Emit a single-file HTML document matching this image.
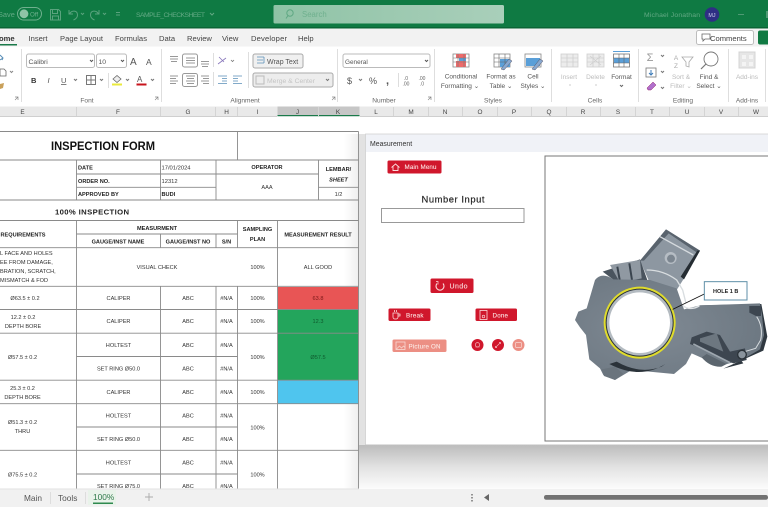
<!DOCTYPE html>
<html><head><meta charset="utf-8"><title>Excel Measurement</title>
<style>
html,body{margin:0;padding:0;background:#fff;width:768px;height:507px;overflow:hidden}
svg{display:block;font-family:"Liberation Sans",sans-serif;filter:blur(.35px)}
.r{font-size:7.6px;fill:#444}
.g{font-size:6.6px;fill:#666}
.h{font-size:6.4px;fill:#444;text-anchor:middle}
.t{font-size:5.6px;fill:#333;text-anchor:middle}
.b{font-size:5.6px;fill:#222;font-weight:bold}
.c{text-anchor:middle}
.btn{font-size:6.2px;fill:#fbdcdc;stroke:#fbdcdc;stroke-width:.12}
</style></head><body>
<svg width="768" height="507" viewBox="0 0 768 507" xmlns="http://www.w3.org/2000/svg">
<defs>
<linearGradient id="sb" x1="0" y1="0" x2="0" y2="1"><stop offset="0" stop-color="#bcbcbc"/><stop offset=".5" stop-color="#e2e2e2"/><stop offset="1" stop-color="#fcfcfc"/></linearGradient>
<linearGradient id="sl" x1="0" y1="0" x2="1" y2="0"><stop offset="0" stop-color="#fff"/><stop offset=".6" stop-color="#f0f0f0"/><stop offset="1" stop-color="#d4d4d4"/></linearGradient>
<linearGradient id="se" x1="0" y1="0" x2="1" y2="0"><stop offset="0" stop-color="#8fc3a6"/><stop offset="1" stop-color="#a9cfba"/></linearGradient>
<radialGradient id="metal" cx=".4" cy=".5" r=".7"><stop offset="0" stop-color="#808a94"/><stop offset="1" stop-color="#6a757f"/></radialGradient>
</defs>
<rect width="768" height="507" fill="#fff"/>

<!-- Title bar -->
<rect width="768" height="28" fill="#0f7a43"/>
<rect y="27" width="768" height="1.5" fill="#0a6535"/>
<text x="-2" y="17" font-size="7.4" fill="#63a984">Save</text>
<rect x="17.5" y="7.5" width="24" height="12.5" rx="6.2" fill="#0f7a43" stroke="#6fb08e"/>
<circle cx="24" cy="13.8" r="4.4" fill="#8fc3a6"/>
<text x="30" y="16.3" font-size="6.2" fill="#6fb08e">Off</text>
<g fill="none" stroke="#5aa37e" stroke-width="1">
<path d="M50.5 9.5h8l2 2v8.5h-10zM52.5 9.500v4h5v-4M52.500 20v-4h6v4"/>
<path d="M69 10v4h4M69.500 14c2-4 8-4 8 1 0 2-1.500 4-4 5"/>
<path d="M81 13l1.500 1.500 1.500-1.500"/>
<path d="M99 10v4h-4M98.500 14c-2-4-8-4-8 1 0 2 1.500 4 4 5"/>
<path d="M103 13l1.500 1.500 1.500-1.500"/>
<path d="M116 12.500h4M116 15h4"/>
</g>
<text x="136" y="17" font-size="6.800" fill="#63a984" textLength="69">SAMPLE_CHECKSHEET</text>
<path d="M210 13l2 2 2-2" fill="none" stroke="#63a984"/>
<rect x="273.500" y="5" width="230.500" height="18.500" rx="1.500" fill="url(#se)"/>
<circle cx="290" cy="13" r="3.200" fill="none" stroke="#5fa883"/><path d="M288 15.500l-2 3" stroke="#5fa883"/>
<text x="302" y="17" font-size="7.800" fill="#6fb08e">Search</text>
<text x="644" y="17" font-size="6.800" fill="#63a984" textLength="56">Michael Jonathan</text>
<circle cx="712" cy="14.500" r="7.300" fill="#2e2f84"/>
<text x="712" y="17" font-size="5.400" fill="#cfd0ee" class="c">MJ</text>
<rect x="738" y="14" width="6" height="1" fill="#4f9a74"/>
<rect x="766" y="11" width="2" height="7" fill="#4f9a74"/>

<!-- Tab strip -->
<rect y="28.500" width="768" height="18" fill="#f2f2f2"/>
<text x="-1" y="41" class="r" style="font-weight:bold;fill:#333">ome</text>
<rect x="0" y="44" width="17" height="1.500" fill="#1a7a4a"/>
<text x="28.500" y="41" class="r">Insert</text>
<text x="60" y="41" class="r" textLength="43">Page Layout</text>
<text x="115" y="41" class="r" textLength="32">Formulas</text>
<text x="159" y="41" class="r">Data</text>
<text x="187" y="41" class="r">Review</text>
<text x="222" y="41" class="r">View</text>
<text x="251" y="41" class="r" textLength="36">Developer</text>
<text x="298" y="41" class="r">Help</text>
<rect x="696.500" y="30.500" width="57" height="14" rx="2" fill="#fff" stroke="#bdbdbd"/>
<path d="M702 34h8v5h-5l-2 2v-2h-1z" fill="none" stroke="#666" stroke-width=".8"/>
<text x="710" y="41" font-size="7.600" fill="#444">Comments</text>
<rect x="758" y="30.500" width="12" height="14" rx="2" fill="#117a43"/>

<!-- Ribbon -->
<rect y="46.500" width="768" height="60" fill="#fff"/>
<g fill="#dedede">
<rect x="21" y="49" width="1" height="53"/><rect x="161" y="49" width="1" height="53"/><rect x="337" y="49" width="1" height="53"/>
<rect x="434" y="49" width="1" height="53"/><rect x="551" y="49" width="1" height="53"/><rect x="638" y="49" width="1" height="53"/>
<rect x="728" y="49" width="1" height="53"/><rect x="765" y="49" width="1" height="53"/>
<rect x="248" y="52" width="1" height="36"/><rect x="213" y="53" width="1" height="14"/><rect x="213" y="72" width="1" height="14"/>
<rect x="108" y="73" width="1" height="15"/>
</g>
<path d="M0 55l3 3-1 2M3 58l-3 2" stroke="#5a8fb8" fill="none"/>
<path d="M0 69h4l2 2v5H0z" fill="#fff" stroke="#666" stroke-width=".8"/>
<path d="M10 71l1.500 1.500 1.500-1.500" stroke="#888" fill="none"/>
<path d="M0 84l4-1-1 5-3 1z" fill="#c9a05a"/>
<path d="M15 97h3v3M15 100l3-3" stroke="#888" fill="none" stroke-width=".7"/>
<!-- Font group -->
<rect x="26.500" y="54" width="68" height="13.500" rx="2" fill="#fff" stroke="#bbb"/>
<text x="28.500" y="64" font-size="6.800" fill="#555">Calibri</text>
<path d="M90 60l1.500 1.500 1.500-1.500" stroke="#555" fill="none"/>
<rect x="96.500" y="54" width="30" height="13.500" rx="2" fill="#fff" stroke="#bbb"/>
<text x="98.500" y="64" font-size="6.800" fill="#555">10</text>
<path d="M121 60l1.500 1.500 1.500-1.500" stroke="#555" fill="none"/>
<text x="130" y="65" font-size="10" fill="#555">A</text><text x="146" y="65" font-size="8.500" fill="#555">A</text>
<text x="31" y="83" font-size="7.500" font-weight="bold" fill="#333">B</text>
<text x="47.500" y="83" font-size="7.500" font-style="italic" fill="#555">I</text>
<text x="61" y="83" font-size="7.500" fill="#555" text-decoration="underline">U</text>
<path d="M74 79l1.500 1.500 1.500-1.500M100 79l1.500 1.500 1.500-1.500M126 79l1.500 1.500 1.500-1.500M151 79l1.500 1.500 1.500-1.500" stroke="#777" fill="none"/>
<path d="M86.500 75.500h9v9h-9zM91 75.500v9M86.500 80h9" fill="none" stroke="#777"/>
<path d="M113 79l4-3.500 4 3.500-4 3.500z" fill="#eee" stroke="#666" stroke-width=".8"/>
<rect x="112" y="83.500" width="10" height="2" fill="#eaea3c"/>
<text x="137" y="82" font-size="8" fill="#555">A</text>
<rect x="136.500" y="83.500" width="10" height="2" fill="#c8141c"/>
<text x="87" y="102.500" class="g c">Font</text>
<path d="M155 97h3v3M155 100l3-3" stroke="#888" fill="none" stroke-width=".7"/>
<!-- Alignment -->
<g stroke="#777" stroke-width=".8" fill="none">
<path d="M170 56.500h8M170 59h8M171 61.500h6"/>
<path d="M186 58h9M186 60.500h9M186 63h9"/>
<path d="M201 61.500h8M201 64h8M202 66.500h6"/>
<path d="M170 76h8M170 78.500h6M170 81h8M170 83.500h6"/>
<path d="M186 76h9M187 78.500h7M186 81h9M187 83.500h7"/>
<path d="M201 76h8M203 78.500h6M201 81h8M203 83.500h6"/>
<path d="M218 76h9M222 78.500h5M222 81h5M218 83.500h9" stroke="#5a8fb8"/>
<path d="M233 76h9M233 78.500h5M233 81h5M233 83.500h9" stroke="#5a8fb8"/>
<path d="M218 64l8-6M219 57l5 5" stroke="#8877bb"/>
<path d="M231 60l1.500 1.500 1.500-1.500"/>
</g>
<rect x="182.500" y="54" width="15" height="13" rx="2" fill="none" stroke="#999"/>
<rect x="182.500" y="73.500" width="15" height="13" rx="2" fill="none" stroke="#999"/>
<rect x="253" y="54" width="50" height="14" rx="2" fill="#f0f0f0" stroke="#aaa"/>
<path d="M257 57h7M257 60h6M257 63h7M264 57v6" stroke="#5a8fb8" fill="none" stroke-width=".8"/>
<text x="267" y="64" font-size="7" fill="#555">Wrap Text</text>
<rect x="253" y="73" width="80" height="14" rx="2" fill="#ededed" stroke="#aaa"/>
<rect x="256" y="76" width="8" height="8" fill="none" stroke="#bbb"/>
<text x="267" y="83" font-size="6.800" fill="#c4c4c4">Merge &amp; Center</text>
<path d="M326 79l1.500 1.500 1.500-1.500" stroke="#777" fill="none"/>
<text x="245" y="102.500" class="g c">Alignment</text>
<path d="M332 97h3v3M332 100l3-3" stroke="#888" fill="none" stroke-width=".7"/>
<!-- Number -->
<rect x="343" y="54" width="87" height="13.500" rx="2" fill="#fff" stroke="#bbb"/>
<text x="345" y="64" font-size="6.400" fill="#555">General</text>
<path d="M425 60l1.500 1.500 1.500-1.500" stroke="#555" fill="none"/>
<text x="347" y="84" font-size="9" fill="#555">$</text>
<path d="M359 79l1.500 1.500 1.500-1.500" stroke="#777" fill="none"/>
<text x="369" y="84" font-size="9" fill="#555">%</text>
<text x="386" y="84" font-size="11" font-weight="bold" fill="#555">,</text>
<text x="406" y="80" font-size="5" fill="#666" class="c">.0</text><text x="406" y="85.500" font-size="5" fill="#666" class="c">.00</text>
<text x="422" y="80" font-size="5" fill="#666" class="c">.00</text><text x="422" y="85.500" font-size="5" fill="#666" class="c">.0</text>
<rect x="398" y="73" width="1" height="14" fill="#ddd"/>
<text x="384" y="102.500" class="g c">Number</text>
<path d="M428 97h3v3M428 100l3-3" stroke="#888" fill="none" stroke-width=".7"/>
<!-- Styles -->
<g>
<rect x="453" y="54" width="16" height="13" fill="#fff" stroke="#888" stroke-width=".8"/>
<rect x="456" y="54" width="10" height="4" fill="#ee6a6a"/><rect x="456" y="61" width="10" height="6" fill="#ee6a6a"/><rect x="459" y="58" width="7" height="3" fill="#5a9fd8"/>
<path d="M453 58h16M453 62h16M458 54v13M464 54v13" stroke="#777" stroke-width=".6"/>
<rect x="494" y="54" width="16" height="13" fill="#fff" stroke="#888" stroke-width=".8"/>
<rect x="500" y="59" width="10" height="8" fill="#5a9fd8"/>
<path d="M494 58h16M494 62h16M499 54v13M505 54v13" stroke="#666" stroke-width=".6"/>
<path d="M501 69l8-10 3 2-8 9z" fill="#88a8d0" stroke="#556" stroke-width=".5"/>
<rect x="525" y="54" width="16" height="13" fill="#fff" stroke="#888" stroke-width=".8"/>
<rect x="526" y="58" width="14" height="8" fill="#5a9fd8"/>
<path d="M532 69l8-10 3 2-8 9z" fill="#88a8d0" stroke="#556" stroke-width=".5"/>
</g>
<g font-size="6.500" fill="#555" text-anchor="middle">
<text x="461" y="78.500">Conditional</text><text x="460" y="88">Formatting ⌄</text>
<text x="501" y="78.500">Format as</text><text x="501" y="88">Table ⌄</text>
<text x="533" y="78.500">Cell</text><text x="533" y="88">Styles ⌄</text>
</g>
<text x="493" y="102.500" class="g c">Styles</text>
<!-- Cells -->
<g stroke="#cfcfcf" stroke-width=".8" fill="#ececec">
<rect x="561" y="54" width="17" height="13"/><path d="M561 58h17M561 62h17M567 54v13M573 54v13" fill="none"/>
<rect x="587" y="54" width="17" height="13"/><path d="M587 58h17M587 62h17M593 54v13M599 54v13M590 56l11 9M601 56l-11 9" fill="none"/>
</g>
<rect x="613.500" y="54" width="16" height="13" fill="#fff" stroke="#777" stroke-width=".8"/>
<rect x="614" y="58" width="15" height="5" fill="#5a9fd8"/>
<path d="M613 58h17M613 63h17M619 54v13M624 54v13" stroke="#666" stroke-width=".6"/>
<path d="M613 51.500h17" stroke="#5a9fd8"/>
<text x="569" y="79" font-size="6.500" class="c" fill="#bcbcbc">Insert</text>
<text x="595.500" y="79" font-size="6.500" class="c" fill="#bcbcbc">Delete</text>
<text x="621.500" y="79" font-size="6.500" class="c" fill="#555">Format</text>
<path d="M569 85h2M595 85h2" stroke="#ccc"/>
<path d="M620 85l1.500 1.500 1.500-1.500" stroke="#666" fill="none"/>
<text x="595" y="102.500" class="g c">Cells</text>
<!-- Editing -->
<text x="650" y="61" font-size="11" fill="#999" class="c">Σ</text>
<path d="M661 55l1.500 1.500 1.500-1.500M661 71l1.500 1.500 1.500-1.500M661 87l1.500 1.500 1.500-1.500" stroke="#777" fill="none"/>
<rect x="646" y="68" width="10" height="9" fill="#fff" stroke="#777" stroke-width=".8"/><path d="M651 70v5M649 73l2 2 2-2" stroke="#3a7ab8" fill="none"/>
<path d="M647 88l6-6 3 3-5 5h-3z" fill="#b070cc" stroke="#805" stroke-width=".4"/>
<text x="676" y="60" font-size="6.500" fill="#aaa" class="c">A</text><text x="676" y="68" font-size="6.500" fill="#aaa" class="c">Z</text>
<path d="M682 57h11l-4 5v5l-3-1v-4z" fill="#fff" stroke="#aaa" stroke-width=".8"/>
<circle cx="711" cy="59" r="7" fill="#fff" stroke="#777" stroke-width=".9"/>
<path d="M706 64l-5 5" stroke="#777" stroke-width="1.200"/>
<text x="681" y="79" font-size="6.500" fill="#bbb" class="c">Sort &amp;</text><text x="681" y="88" font-size="6.500" fill="#bbb" class="c">Filter ⌄</text>
<text x="709" y="79" font-size="6.500" fill="#555" class="c">Find &amp;</text><text x="709" y="88" font-size="6.500" fill="#555" class="c">Select ⌄</text>
<text x="683" y="102.500" class="g c">Editing</text>
<!-- Add-ins -->
<rect x="739" y="52" width="16" height="16" fill="#e6e6e6" stroke="#d4d4d4"/>
<path d="M742 55h4v4h-4zM749 55h4v4h-4zM742 62h4v4h-4zM749 62h4v4h-4z" fill="#f4f4f4"/>
<text x="747" y="79" font-size="6.500" fill="#bbb" class="c">Add-ins</text>
<text x="747" y="102.500" class="g c">Add-ins</text>

<!-- Column headers -->
<rect y="106.500" width="768" height="10" fill="#e9e9e9"/>
<rect x="277.500" y="106.500" width="82" height="9.500" fill="#c6c6c6"/>
<rect x="277.500" y="115" width="82" height="1.200" fill="#1a7a4a"/>
<rect y="116" width="277" height="1" fill="#cfcfcf"/><rect x="360" y="116" width="408" height="1" fill="#cfcfcf"/>
<g fill="#d4d4d4">
<rect x="76" y="107" width="1" height="9"/><rect x="160" y="107" width="1" height="9"/><rect x="215" y="107" width="1" height="9"/><rect x="237" y="107" width="1" height="9"/><rect x="318" y="107" width="1" height="9"/>
<rect x="393" y="107" width="1" height="9"/><rect x="428" y="107" width="1" height="9"/><rect x="462" y="107" width="1" height="9"/><rect x="497" y="107" width="1" height="9"/><rect x="531" y="107" width="1" height="9"/><rect x="566" y="107" width="1" height="9"/><rect x="600" y="107" width="1" height="9"/><rect x="635" y="107" width="1" height="9"/><rect x="669" y="107" width="1" height="9"/><rect x="704" y="107" width="1" height="9"/><rect x="738" y="107" width="1" height="9"/>
</g>
<g>
<text x="22.500" y="113.800" class="h">E</text><text x="118" y="113.800" class="h">F</text><text x="188" y="113.800" class="h">G</text><text x="226.500" y="113.800" class="h">H</text><text x="257.500" y="113.800" class="h">I</text><text x="297.500" y="113.800" class="h">J</text><text x="338" y="113.800" class="h">K</text><text x="376" y="113.800" class="h">L</text>
<text x="411" y="113.800" class="h">M</text><text x="445" y="113.800" class="h">N</text><text x="480" y="113.800" class="h">O</text><text x="514" y="113.800" class="h">P</text><text x="549" y="113.800" class="h">Q</text><text x="583" y="113.800" class="h">R</text><text x="618" y="113.800" class="h">S</text><text x="652" y="113.800" class="h">T</text><text x="687" y="113.800" class="h">U</text><text x="721" y="113.800" class="h">V</text><text x="756" y="113.800" class="h">W</text>
</g>

<!-- Window shadow (under fills) -->
<rect x="344" y="134" width="22" height="355" fill="url(#sl)"/>

<!-- Form fills -->
<rect x="278" y="287" width="80.500" height="22" fill="#e85555"/>
<rect x="278" y="310" width="80.500" height="70" fill="#23a55c"/>
<rect x="278" y="380.500" width="80.500" height="23" fill="#4fc5ee"/>

<!-- Form grid -->
<g stroke="#8a8a8a" stroke-width=".9" fill="none">
<path d="M0 131.500H358.500M0 160H358.500M0 200H358.500M0 220.500H358.500M0 247.700H358.500M0 286.300H358.500M0 309.500H358.500M0 333.200H358.500M0 380.200H358.500M0 403.700H358.500M0 450.300H358.500"/>
<path d="M76.500 160V200M76.500 174H216M76.500 187.300H216M216 174H318.500M318.500 187.300H358.500"/>
<path d="M76.500 234H237.500M237.500 220.500V247.700M277.500 220.500V489"/>
<path d="M358.500 131.500V489M237.500 131.500V160M160.500 160V200M216 160V200M318.500 160V200"/>
<path d="M76.500 220.500V489M160.500 234V247.700M216 234V247.700M160.500 286.300V489M216 286.300V489M237.500 286.300V489"/>
<path d="M76.500 356.500H237.500M76.500 427H237.500M76.500 474H237.500"/>
</g>
<!-- Form text -->
<text x="103" y="150" font-size="11.600" font-weight="bold" fill="#111" class="c" textLength="104" lengthAdjust="spacingAndGlyphs">INSPECTION FORM</text>
<text x="78" y="169.500" class="b">DATE</text><text x="78" y="182.800" class="b">ORDER NO.</text><text x="78" y="196" class="b">APPROVED BY</text>
<text x="161.500" y="169.500" font-size="5.800" fill="#333">17/01/2024</text><text x="161.500" y="182.800" font-size="5.800" fill="#333">12312</text><text x="161.500" y="196" class="b">BUDI</text>
<text x="267" y="169.200" class="b c">OPERATOR</text><text x="267" y="189" class="t">AAA</text>
<text x="338.500" y="171" class="b c">LEMBAR/</text><text x="338.500" y="181.500" class="b c" font-style="italic">SHEET</text><text x="338.500" y="196" class="t">1/2</text>
<text x="92" y="214.500" font-size="7.700" font-weight="bold" fill="#222" class="c" textLength="74">100%  INSPECTION</text>
<text x="23" y="236.500" class="b c">REQUIREMENTS</text>
<text x="157" y="229.800" class="b c">MEASURMENT</text>
<text x="118" y="243.500" class="b c">GAUGE/INST NAME</text><text x="188" y="243.500" class="b c">GAUGE/INST NO</text><text x="226.500" y="243.500" class="b c">S/N</text>
<text x="257.500" y="231" class="b c">SAMPLING</text><text x="257.500" y="241" class="b c">PLAN</text>
<text x="318" y="236.500" class="b c">MEASUREMENT RESULT</text>
<g font-size="5.600" fill="#333">
<text x="0" y="255">L FACE  AND HOLES</text><text x="0" y="264">EE FROM DAMAGE,</text><text x="0" y="273">BRATION, SCRATCH,</text><text x="0" y="282">MISMATCH &amp; FOD</text>
</g>
<text x="157" y="269" class="t">VISUAL CHECK</text><text x="257.500" y="269" class="t">100%</text><text x="318" y="269" class="t">ALL GOOD</text>
<text x="25" y="300" class="t">Ø63.5 ± 0.2</text><text x="118.500" y="300" class="t">CALIPER</text><text x="188" y="300" class="t">ABC</text><text x="226.500" y="300" class="t">#N/A</text><text x="257.500" y="300" class="t">100%</text><text x="318" y="300" class="t" style="fill:#7a1818">63.8</text>
<text x="23" y="319" class="t">12.2 ± 0.2</text><text x="23" y="328" class="t">DEPTH BORE</text><text x="118.500" y="323" class="t">CALIPER</text><text x="188" y="323" class="t">ABC</text><text x="226.500" y="323" class="t">#N/A</text><text x="257.500" y="323" class="t">100%</text><text x="318" y="323" class="t" style="fill:#0f5a2e">12.3</text>
<text x="22.500" y="359" class="t">Ø57.5 ± 0.2</text><text x="118.500" y="347" class="t">HOLTEST</text><text x="118.500" y="370.500" class="t">SET RING Ø50.0</text><text x="188" y="347" class="t">ABC</text><text x="188" y="370.500" class="t">ABC</text><text x="226.500" y="347" class="t">#N/A</text><text x="226.500" y="370.500" class="t">#N/A</text><text x="257.500" y="359" class="t">100%</text><text x="318" y="359" class="t" style="fill:#0f5a2e">Ø57.5</text>
<text x="22.500" y="390" class="t">25.3 ± 0.2</text><text x="22.500" y="399" class="t">DEPTH BORE</text><text x="118.500" y="394" class="t">CALIPER</text><text x="188" y="394" class="t">ABC</text><text x="226.500" y="394" class="t">#N/A</text><text x="257.500" y="394" class="t">100%</text>
<text x="22.500" y="424" class="t">Ø51.3 ± 0.2</text><text x="22.500" y="433" class="t">THRU</text><text x="118.500" y="417.500" class="t">HOLTEST</text><text x="118.500" y="441" class="t">SET RING Ø50.0</text><text x="188" y="417.500" class="t">ABC</text><text x="188" y="441" class="t">ABC</text><text x="226.500" y="417.500" class="t">#N/A</text><text x="226.500" y="441" class="t">#N/A</text><text x="257.500" y="429.500" class="t">100%</text>
<text x="22.500" y="476.500" class="t">Ø75.5 ± 0.2</text><text x="118.500" y="464.500" class="t">HOLTEST</text><text x="118.500" y="488" class="t">SET RING Ø75.0</text><text x="188" y="464.500" class="t">ABC</text><text x="188" y="488" class="t">ABC</text><text x="226.500" y="464.500" class="t">#N/A</text><text x="226.500" y="488" class="t">#N/A</text><text x="257.500" y="476.500" class="t">100%</text>

<!-- Window -->
<rect x="359" y="445" width="409" height="44" fill="url(#sb)"/>
<rect x="359" y="134" width="7" height="311" fill="#e2e2e2"/>
<rect x="365.500" y="134" width="403" height="311" fill="#fff"/>
<rect x="365.500" y="134" width="403" height="18" fill="#f0f2f7"/>
<path d="M365.500 445V134H768" stroke="#d0d0d0" fill="none" stroke-width=".8"/>
<rect x="365.500" y="444.500" width="403" height="1" fill="#c0c0c0"/>
<text x="370" y="146" font-size="6.900" fill="#333">Measurement</text>

<!-- Window controls -->
<rect x="387.500" y="160.500" width="54" height="13" rx="1.500" fill="#d0172c"/>
<path d="M391.500 167.500l4-3.500 4 3.500M393 166.500v4h5v-4" fill="none" stroke="#fbdcdc" stroke-width=".9"/>
<text x="404.500" y="169.200" class="btn" textLength="32">Main Menu</text>
<text x="453" y="202.500" font-size="9.400" fill="#222" stroke="#222" stroke-width=".18" class="c" textLength="63">Number Input</text>
<rect x="381.500" y="208.500" width="142.500" height="14" fill="#fff" stroke="#999" stroke-width="1"/>
<rect x="430.500" y="278.500" width="43" height="14.500" rx="1.500" fill="#d0172c"/>
<path d="M437 283.500a4 4 0 1 0 6 0" fill="none" stroke="#fbdcdc" stroke-width="1.100"/>
<path d="M436 281.500h2v3" fill="none" stroke="#fbdcdc" stroke-width=".7"/>
<text x="449.500" y="288.500" class="btn" style="font-size:7px" textLength="18">Undo</text>
<rect x="388.500" y="308.500" width="42" height="12.500" rx="1.500" fill="#d0172c"/>
<path d="M393 313h5v4a2 2 0 0 1-2 2h-1a2 2 0 0 1-2-2zM398 314h2v2h-2M394.500 310v2M396.500 310v2" fill="none" stroke="#fbdcdc" stroke-width=".8"/>
<text x="406" y="317.500" class="btn" textLength="17.500">Break</text>
<rect x="475.500" y="308.500" width="41.500" height="12.500" rx="1.500" fill="#d0172c"/>
<rect x="480" y="310.500" width="7" height="9" fill="none" stroke="#fbdcdc" stroke-width=".8"/><circle cx="483.500" cy="316.500" r="1.300" fill="none" stroke="#fbdcdc" stroke-width=".6"/>
<text x="492.500" y="317.500" class="btn" textLength="15.500">Done</text>
<rect x="392.500" y="339.500" width="54" height="12.500" rx="1.500" fill="#ec8f84"/>
<rect x="396" y="342" width="9" height="7.500" fill="none" stroke="#f9d9d4" stroke-width=".8"/><path d="M396.500 349l3-3 2 2 2-2 1.500 1.500" fill="none" stroke="#f9d9d4" stroke-width=".7"/>
<text x="408.500" y="348.500" class="btn" style="fill:#fbe6e2;stroke:#fbe6e2" textLength="32">Picture ON</text>
<circle cx="477.500" cy="345" r="6" fill="#d0172c"/><circle cx="477.500" cy="344.800" r="2.200" fill="none" stroke="#f5b9bd" stroke-width=".7"/><path d="M475.500 347h4" stroke="#f5b9bd" stroke-width=".6"/>
<circle cx="498" cy="345" r="6" fill="#d0172c"/><path d="M495.500 347.500l5-5M499 342.500h1.500v1.500M495.500 346v1.500H497" fill="none" stroke="#f5b9bd" stroke-width=".7"/>
<circle cx="518.500" cy="345" r="6" fill="#ec8f84"/><rect x="515.500" y="342.500" width="6" height="5" rx="1" fill="none" stroke="#f9d9d4" stroke-width=".7"/>

<!-- Image panel -->
<rect x="545" y="156" width="224" height="285" fill="#fff" stroke="#777" stroke-width="1"/>
<g transform="translate(560 220) scale(.33333)">
<path d="M240 122L318 28 420 92 372 175 350 210 270 190Z" fill="#8d97a1"/>
<path d="M318 28L420 92 414 100 326 40 252 122 240 122Z" fill="#59636d"/>
<path d="M420 92L372 178 362 170 412 92Z" fill="#252c32"/>
<path d="M300 50l100 55" stroke="#d5dade" stroke-width="4" fill="none"/>
<circle cx="332" cy="114" r="18" fill="#b6bdc4"/><circle cx="333" cy="116" r="12" fill="#7c8690"/>
<path d="M260 150q50 0 90 30l18 30 10 40" fill="none" stroke="#d8dde0" stroke-width="4"/>
<path d="M128 155L240 118 262 180 175 190Z" fill="#4a545e"/>
<path d="M150 135L240 120 245 175 180 188Z" fill="#9099a2"/>
<path d="M172 140l8 45M208 130l8 50" stroke="#3a444e" stroke-width="6" fill="none"/>
<path d="M610 392L622 350 604 252 420 256 550 430 490 446 520 432Z" fill="#2f3840"/>
<path d="M105 180Q125 155 160 178L270 180 350 205 372 268 420 256 600 250 606 285 612 345 600 388 545 420 490 435 440 420 395 400 378 432 342 462 215 450 165 480 130 465 120 445 88 418 78 345 60 322 45 300 55 275 80 265Z" fill="url(#metal)"/>
<path d="M568 258h35v30h-15l-20-10z" fill="#3d4650"/>
<path d="M590 290q20 30 12 70l-15 25-40 12" fill="none" stroke="#d8dde0" stroke-width="3"/>
<path d="M395 352L440 335 480 345 510 395 555 385 560 420 520 430 425 385 390 372Z" fill="#3d4650"/>
<path d="M420 355L470 340 490 395 420 365Z" fill="#6d7780"/>
<path d="M400 372L510 428" stroke="#9ea7af" stroke-width="5"/>
<path d="M425 412q25 30 60 28l15-8-60-30z" fill="#5b656e"/>
<circle cx="546" cy="404" r="13" fill="#89939c" stroke="#2a3238" stroke-width="4"/>
<path d="M148 432Q240 480 316 432L305 440Q240 465 170 425Z" fill="#2b333a"/>
<path d="M125 448L165 440 190 462 165 480 132 468Z" fill="#6a747d"/>
<path d="M368 256q20 18 50 2" fill="none" stroke="#dfe3e6" stroke-width="4"/>
<circle cx="239" cy="308" r="108" fill="#e0dc2c"/>
<circle cx="239" cy="308" r="102" fill="#2a3238"/>
<circle cx="239" cy="308" r="99" fill="#b4bbc1"/>
<circle cx="239" cy="308" r="91" fill="#fff"/>
<path d="M338 268L433 222" stroke="#111" stroke-width="2.500"/>
<rect x="433" y="185" width="128" height="55" fill="#fff" stroke="#5f8fa8" stroke-width="3"/>
<text x="497" y="219" font-size="16.500" font-weight="bold" fill="#222" text-anchor="middle">HOLE 1 B</text>
</g>

<!-- Bottom sheet bar -->
<rect y="489" width="768" height="18" fill="#f1f1f1"/>
<rect y="488.500" width="359" height="1" fill="#e2e2e2"/>
<text x="24" y="501" font-size="8.300" fill="#555">Main</text>
<rect x="50" y="492" width="1" height="12" fill="#ddd"/>
<text x="58" y="501" font-size="8.300" fill="#555">Tools</text>
<rect x="85" y="492" width="1" height="12" fill="#ddd"/>
<rect x="88" y="490" width="28" height="15" fill="#e9f3ea"/>
<text x="93" y="500" font-size="8.300" fill="#2f7a4a">100%</text>
<rect x="93" y="502.500" width="20" height="1.500" fill="#2f8a4f"/>
<path d="M149 493v8M145 497h8" stroke="#aaa" stroke-width=".9"/>
<path d="M472 494v1.500M472 497v1.500M472 500v1.500" stroke="#555" stroke-width="1.200"/>
<path d="M489 494l-5 3.500 5 3.500z" fill="#666"/>
<rect x="544" y="495" width="224" height="4.800" rx="2.200" fill="#727272"/>
</svg>
</body></html>
